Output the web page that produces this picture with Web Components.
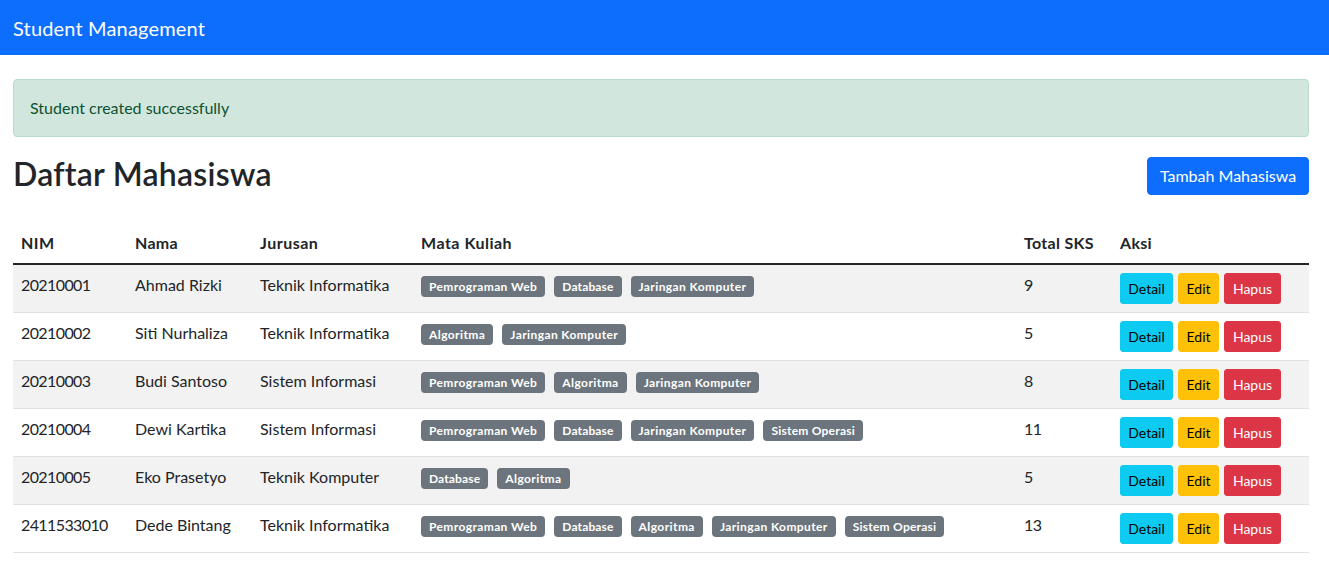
<!doctype html>
<html lang="id"><head><meta charset="utf-8"><title>Student Management</title>
<style>
html,body{margin:0;padding:0;background:#fff}
body{font:400 16px/1.5 Lato,"Open Sans",sans-serif;color:#212529;--cols:114px 125px 161px 603px 96px 197px}
</style></head><body>
<app-navbar brand="Student Management"></app-navbar>
<app-page>
  <app-alert>Student created successfully</app-alert>
  <page-header heading="Daftar Mahasiswa"><app-button variant="primary" size="lg" slot="action">Tambah Mahasiswa</app-button></page-header>
  <student-table>
    <student-row nim="20210001" name="Ahmad Rizki" major="Teknik Informatika" sks="9" striped>
      <app-badge>Pemrograman Web</app-badge><app-badge>Database</app-badge><app-badge>Jaringan Komputer</app-badge>
    </student-row>
    <student-row nim="20210002" name="Siti Nurhaliza" major="Teknik Informatika" sks="5">
      <app-badge>Algoritma</app-badge><app-badge>Jaringan Komputer</app-badge>
    </student-row>
    <student-row nim="20210003" name="Budi Santoso" major="Sistem Informasi" sks="8" striped>
      <app-badge>Pemrograman Web</app-badge><app-badge>Algoritma</app-badge><app-badge>Jaringan Komputer</app-badge>
    </student-row>
    <student-row nim="20210004" name="Dewi Kartika" major="Sistem Informasi" sks="11">
      <app-badge>Pemrograman Web</app-badge><app-badge>Database</app-badge><app-badge>Jaringan Komputer</app-badge><app-badge>Sistem Operasi</app-badge>
    </student-row>
    <student-row nim="20210005" name="Eko Prasetyo" major="Teknik Komputer" sks="5" striped>
      <app-badge>Database</app-badge><app-badge>Algoritma</app-badge>
    </student-row>
    <student-row nim="2411533010" name="Dede Bintang" major="Teknik Informatika" sks="13">
      <app-badge>Pemrograman Web</app-badge><app-badge>Database</app-badge><app-badge>Algoritma</app-badge><app-badge>Jaringan Komputer</app-badge><app-badge>Sistem Operasi</app-badge>
    </student-row>
  </student-table>
</app-page>
<script>
function define(name, css, html, init){
  customElements.define(name, class extends HTMLElement{
    constructor(){super();const r=this.attachShadow({mode:'open'});
      r.innerHTML='<style>'+css+'</style>'+(typeof html==='function'?html(this):html);}
    connectedCallback(){
      if(init) init(this);
    }
  });
}
const esc=s=>String(s||'').replace(/[&<>"]/g,c=>({'&':'&amp;','<':'&lt;','>':'&gt;','"':'&quot;'}[c]));

define('app-navbar',
 ':host{display:flex;align-items:center;height:55px;background:#0d6efd;padding:0 13px;box-sizing:border-box}.brand{font-size:20px;line-height:30px;color:#fff;letter-spacing:.16px}',
 '<span class="brand"></span>',
 el=>{el.shadowRoot.querySelector('.brand').textContent=el.getAttribute('brand')});

define('app-page',
 ':host{display:block;padding:24px 20px 0 13px}',
 '<slot></slot>');

define('app-alert',
 ':host{display:block;box-sizing:border-box;height:58px;padding:16px;margin-bottom:16px;background:#d1e7dd;border:1px solid #badbcc;border-radius:4px;color:#0f5132}',
 '<slot></slot>');

define('page-header',
 ':host{display:flex;justify-content:space-between;align-items:center;margin-bottom:24px}h2{margin:0 0 6px;padding-top:2px;font-size:32px;line-height:38px;font-weight:600;letter-spacing:.25px}',
 '<h2></h2><slot name="action"></slot>',
 el=>{el.shadowRoot.querySelector('h2').textContent=el.getAttribute('heading')});

define('app-button',
 `:host{display:inline-flex;align-items:center;justify-content:center;box-sizing:border-box;height:31px;padding:0 8px;border-radius:3px;font-size:14px;line-height:21px;border:1px solid transparent;white-space:nowrap;cursor:pointer}
  :host([variant=primary]){background:#0d6efd;border-color:#0d6efd;color:#fff}
  :host([variant=info]){background:#0dcaf0;border-color:#0dcaf0;color:#000;width:53px}
  :host([variant=warning]){background:#ffc107;border-color:#ffc107;color:#000;width:41px}
  :host([variant=danger]){background:#dc3545;border-color:#dc3545;color:#fff;width:57px}
  :host([size=lg]){height:38px;width:162px;padding:0 12px;border-radius:4px;font-size:16px;line-height:24px}`,
 '<slot></slot>');

const badgeTracking={'Database':'.14px','Algoritma':'.42px','Sistem Operasi':'.24px','Jaringan Komputer':'.4px'};
define('app-badge',
 ':host{display:inline-block;box-sizing:border-box;height:21px;padding:4px 8px;border-radius:4px;background:#6c757d;color:#fff;font-size:12px;line-height:13px;font-weight:700;letter-spacing:var(--track,.39px);white-space:nowrap}',
 '<slot></slot>',
 el=>{const t=badgeTracking[el.textContent.trim()];if(t)el.style.setProperty('--track',t)});

define('student-table',
 `:host{display:block}
  .head{display:grid;grid-template-columns:var(--cols);border-bottom:2px solid #212529}
  .head div{padding:8px;font-weight:700;letter-spacing:.3px;white-space:nowrap}
  .head .w{letter-spacing:.5px}`,
 `<div class="head"><div class="w">NIM</div><div>Nama</div><div class="w">Jurusan</div><div class="w">Mata Kuliah</div><div>Total SKS</div><div>Aksi</div></div><slot></slot>`);

define('student-row',
 `:host{display:grid;grid-template-columns:var(--cols);height:48px;box-sizing:border-box;border-bottom:1px solid #dee2e6}
  :host([striped]){background:#f2f2f2}
  .c{padding:8px;white-space:nowrap;min-width:0}
  .num{letter-spacing:-.6px}
  .badges{display:flex;gap:9px;align-items:flex-start;padding-top:11px}
  .actions{display:flex;gap:5px;align-items:flex-start}`,
 el=>`<div class="c num">${esc(el.getAttribute('nim'))}</div><div class="c">${esc(el.getAttribute('name'))}</div><div class="c">${esc(el.getAttribute('major'))}</div>
  <div class="c badges"><slot></slot></div><div class="c num">${esc(el.getAttribute('sks'))}</div>
  <div class="c actions"><app-button variant="info">Detail</app-button><app-button variant="warning">Edit</app-button><app-button variant="danger">Hapus</app-button></div>`);
</script>
</body></html>
